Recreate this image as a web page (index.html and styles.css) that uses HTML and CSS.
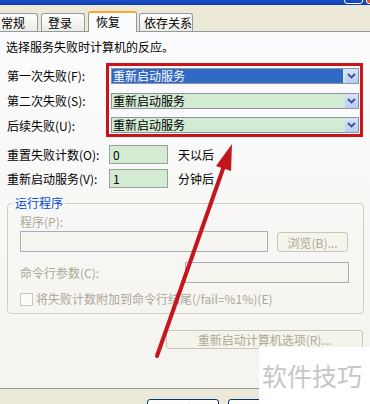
FILE: index.html
```html
<!DOCTYPE html>
<html lang="zh-CN">
<head>
    <meta charset="UTF-8">
    <title>服务属性 - 恢复</title>
    <link rel="stylesheet" href="styles.css">
</head>
<body>
    <div class="window">
        <div class="titlebar">
            <span class="title-btn"></span>
            <span class="title-close"></span>
        </div>

        <div class="tabs">
            <div class="tab tab-1">常规</div>
            <div class="tab tab-2">登录</div>
            <div class="tab tab-3 tab-active">恢复</div>
            <div class="tab tab-4">依存关系</div>
        </div>

        <div class="panel">
            <p class="intro">选择服务失败时计算机的反应。</p>

            <div class="fail-group">
                <div class="fail-labels">
                    <span>第一次失败(F):</span>
                    <span>第二次失败(S):</span>
                    <span>后续失败(U):</span>
                </div>
                <div class="fail-box">
                    <div class="combo combo-sel">
                        <span class="combo-text">重新启动服务</span>
                        <span class="combo-btn"><svg width="9" height="6" viewBox="0 0 9 6"><polyline points="1,1 4.5,4.5 8,1" fill="none" stroke="#3c5387" stroke-width="1.8"/></svg></span>
                    </div>
                    <div class="combo">
                        <span class="combo-text">重新启动服务</span>
                        <span class="combo-btn"><svg width="9" height="6" viewBox="0 0 9 6"><polyline points="1,1 4.5,4.5 8,1" fill="none" stroke="#3c5387" stroke-width="1.8"/></svg></span>
                    </div>
                    <div class="combo">
                        <span class="combo-text">重新启动服务</span>
                        <span class="combo-btn"><svg width="9" height="6" viewBox="0 0 9 6"><polyline points="1,1 4.5,4.5 8,1" fill="none" stroke="#3c5387" stroke-width="1.8"/></svg></span>
                    </div>
                </div>
            </div>

            <div class="field-row">
                <span class="field-label">重置失败计数(O):</span>
                <span class="num-input">0</span>
                <span class="unit">天以后</span>
            </div>
            <div class="field-row">
                <span class="field-label">重新启动服务(V):</span>
                <span class="num-input">1</span>
                <span class="unit">分钟后</span>
            </div>

            <fieldset class="run-box">
                <legend>运行程序</legend>
                <div class="dis-label">程序(P):</div>
                <div class="prog-row">
                    <span class="text-input prog-input"></span>
                    <span class="btn btn-dis browse">浏览(B)...</span>
                </div>
                <div class="args-row">
                    <span class="dis-label args-label">命令行参数(C):</span>
                    <span class="text-input args-input"></span>
                </div>
                <div class="check-row">
                    <span class="checkbox"></span>
                    <span class="dis-label">将失败计数附加到命令行结尾(/fail=%1%)(E)</span>
                </div>
            </fieldset>

            <div class="restart-row">
                <span class="btn btn-dis restart">重新启动计算机选项(R)...</span>
            </div>
        </div>

        <div class="dlg-buttons">
            <span class="dlg-btn">确定</span>
            <span class="dlg-btn">取消</span>
        </div>

        <!-- annotation arrow drawn over the dialog -->
        <svg class="arrow" width="370" height="404" viewBox="0 0 370 404">
            <line x1="157" y1="356" x2="224" y2="166" stroke="#c4161c" stroke-width="4" stroke-linecap="round"/>
            <polygon points="232,144 216,166 231,171" fill="#c4161c"/>
        </svg>

        <div class="watermark">软件技巧</div>
    </div>
</body>
</html>
```

FILE: styles.css
```css
* {
    box-sizing: border-box;
}

body {
    margin: 0;
    font-family: "Noto Sans CJK SC", "Liberation Sans", sans-serif;
    font-size: 12px;
    color: #000;
    background-color: #ece9d8;
}

.window {
    position: relative;
    width: 370px;
    height: 404px;
    overflow: hidden;
    background-color: #ece9d8;
}

/* title bar strip */
.titlebar {
    height: 5px;
    background: linear-gradient(#1c4fc8, #0a3fb8);
    position: relative;
}

.titlebar .title-btn {
    position: absolute;
    left: 344px;
    top: -12px;
    width: 19px;
    height: 16px;
    border: 1px solid #fff;
    border-radius: 3px;
}

.titlebar .title-close {
    position: absolute;
    left: 366px;
    top: -12px;
    width: 19px;
    height: 16px;
    background-color: #d8532e;
    border: 1px solid #fff;
    border-radius: 3px;
}

/* tabs */
.tabs {
    height: 26px;
    display: flex;
    align-items: flex-end;
    position: relative;
    z-index: 2;
}

.tab {
    height: 18px;
    line-height: 17px;
    padding-left: 6px;
    border: 1px solid #919b9c;
    border-bottom: none;
    border-radius: 3px 3px 0 0;
    background: linear-gradient(#fefefe, #ecebe5);
    white-space: nowrap;
}

.tab-1 {
    margin-left: -6px;
    width: 44px;
}

.tab-2 {
    margin-left: 3px;
    width: 44px;
}

.tab-3 {
    margin-left: 3px;
    width: 49px;
}

.tab-4 {
    margin-left: 2px;
    width: 54px;
    padding-left: 4px;
}

.tab-active {
    height: 21px;
    margin-bottom: -1px;
    padding-left: 7px;
    line-height: 17px;
    background: #fcfcfe;
    border-top: 2px solid #f5a636;
}

/* page panel */
.panel {
    height: 358px;
    margin-left: -1px;
    width: 380px;
    padding-left: 1px;
    border: 1px solid #919b9c;
    background: linear-gradient(#fcfcfe, #f4f3ee);
    position: relative;
    z-index: 1;
}

.intro {
    margin: 7px 0 0 5px;
    line-height: 16px;
}

.fail-group {
    display: flex;
    margin-top: 8px;
}

.fail-labels {
    width: 105px;
    padding: 5px 0 0 6px;
    display: flex;
    flex-direction: column;
    gap: 9px;
    line-height: 16px;
}

.fail-box {
    width: 257px;
    border: 3px solid #cc1418;
    padding: 2px 1px 1px 2px;
    display: flex;
    flex-direction: column;
}

.combo {
    height: 16px;
    display: flex;
    border: 1px solid #8c95a3;
    background-color: #d3ebd3;
}

.combo + .combo {
    margin-top: 9px;
}

.combo + .combo + .combo {
    margin-top: 8px;
}

.combo-text {
    flex: 1;
    padding-left: 1px;
    line-height: 14px;
}

.combo-sel .combo-text {
    background-color: #316ac5;
    color: #fff;
    margin: 0 2px 0 0;
}

.combo-btn {
    width: 13px;
    display: flex;
    align-items: center;
    justify-content: center;
    background: linear-gradient(#d9e4fb, #b9cbf3);
}

.field-row {
    display: flex;
    align-items: center;
    height: 19px;
    padding-left: 6px;
    margin-top: 8px;
}

.field-row + .field-row {
    margin-top: 5px;
}

.field-label {
    width: 102px;
}

.num-input {
    width: 59px;
    height: 19px;
    line-height: 17px;
    padding-left: 3px;
    border: 1px solid #9aa39c;
    background-color: #d3ebd3;
}

.unit {
    margin-left: 10px;
}

/* run program group */
.run-box {
    width: 356px;
    margin: 7px 0 0 6px;
    padding: 3px 14px 6px 12px;
    border: 1px solid #d0d0bf;
    border-radius: 4px;
}

.run-box legend {
    margin-left: -7px;
    padding: 0 2px;
    line-height: 16px;
    color: #0046d5;
}

.dis-label {
    color: #aca899;
    line-height: 16px;
}

.text-input {
    height: 21px;
    border: 1px solid #a9aeb4;
    background-color: #f6f5f0;
}

.prog-row {
    display: flex;
    margin-top: 1px;
}

.prog-input {
    width: 248px;
}

.btn {
    display: flex;
    align-items: center;
    justify-content: center;
    height: 20px;
    border: 1px solid #c9c7ba;
    border-radius: 3px;
    background-color: #f5f4ea;
    white-space: nowrap;
}

.btn-dis {
    color: #aca899;
}

.browse {
    width: 71px;
    margin: 1px 0 0 9px;
}

.args-row {
    display: flex;
    align-items: center;
    margin-top: 10px;
}

.args-label {
    width: 165px;
}

.args-input {
    width: 164px;
}

.check-row {
    display: flex;
    align-items: center;
    margin-top: 8px;
}

.checkbox {
    width: 13px;
    height: 13px;
    margin-right: 3px;
    border: 1px solid #c9c7ba;
    background-color: #fcfcfb;
}

.restart-row {
    display: flex;
    margin-top: 16px;
    padding-left: 165px;
}

.restart {
    width: 197px;
    height: 19px;
}

/* dialog buttons */
.dlg-buttons {
    display: flex;
    padding: 10px 0 0 147px;
    gap: 9px;
}

.dlg-btn {
    width: 72px;
    height: 23px;
    border: 1px solid #003c74;
    border-radius: 3px;
    background: linear-gradient(#fff, #ecebe6);
    text-align: center;
    line-height: 20px;
}

.arrow {
    position: absolute;
    left: 0;
    top: 0;
    z-index: 5;
    pointer-events: none;
}

.watermark {
    position: absolute;
    left: 259px;
    top: 347px;
    right: 0;
    bottom: 0;
    z-index: 6;
    background-color: #fff;
    color: #c6c6c6;
    font-size: 25px;
    line-height: 30px;
    padding: 13px 0 0 3px;
    white-space: nowrap;
}
```
